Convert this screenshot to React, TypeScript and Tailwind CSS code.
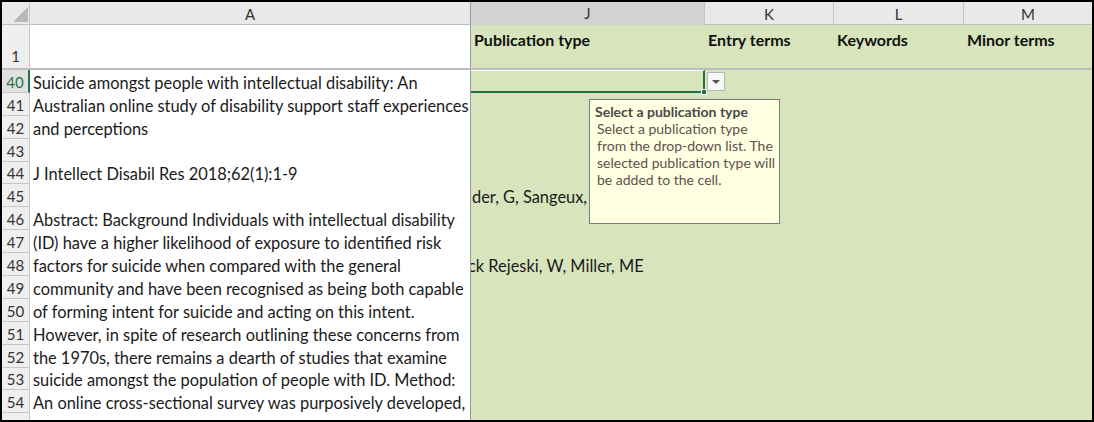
import React from 'react';

const rows: { n: number; a: string; j?: string; jShift?: boolean }[] = [
  { n: 40, a: 'Suicide amongst people with intellectual disability: An' },
  { n: 41, a: 'Australian online study of disability support staff experiences' },
  { n: 42, a: 'and perceptions' },
  { n: 43, a: '' },
  { n: 44, a: 'J Intellect Disabil Res 2018;62(1):1-9' },
  { n: 45, a: '', j: 'der, G, Sangeux,' },
  { n: 46, a: 'Abstract: Background Individuals with intellectual disability' },
  { n: 47, a: '(ID) have a higher likelihood of exposure to identified risk' },
  { n: 48, a: 'factors for suicide when compared with the general', j: 'ck Rejeski, W, Miller, ME', jShift: true },
  { n: 49, a: 'community and have been recognised as being both capable' },
  { n: 50, a: 'of forming intent for suicide and acting on this intent.' },
  { n: 51, a: 'However, in spite of research outlining these concerns from' },
  { n: 52, a: 'the 1970s, there remains a dearth of studies that examine' },
  { n: 53, a: 'suicide amongst the population of people with ID. Method:' },
  { n: 54, a: 'An online cross-sectional survey was purposively developed,' },
];

const font = { fontFamily: 'Lato, "Open Sans", sans-serif' };
const cols = 'grid grid-cols-[28px_441px_234px_129px_130px_128px]';

const App: React.FC = () => {
  return (
    <div className="w-[1094px] h-[422px] bg-white">
      <div
        className="relative w-[1094px] h-[422px] border-2 border-black overflow-hidden bg-white text-[#1a1a1a]"
        style={font}
      >
        {/* column headers */}
        <div className={`${cols} h-[23px] text-[15px] text-[#333] bg-[#e9e9e9] border-b border-[#bdbdbd]`}>
          <div className="relative border-r border-[#c6c6c6]">
            <svg className="absolute left-[11px] top-[5px]" width="15" height="15" viewBox="0 0 15 15">
              <polygon points="15,0 15,15 0,15" fill="#b8b8b8" />
            </svg>
          </div>
          <div className="flex items-center justify-center border-r border-[#9b9b9b]">A</div>
          <div className="flex items-center justify-center bg-[#d3d3d3] border-r border-[#c6c6c6] border-b-2 border-b-[#217346]">J</div>
          <div className="flex items-center justify-center border-r border-[#c6c6c6]">K</div>
          <div className="flex items-center justify-center border-r border-[#c6c6c6]">L</div>
          <div className="flex items-center justify-center">M</div>
        </div>

        {/* row 1 */}
        <div className={`${cols} h-[45px] border-b-2 border-[#bdbdbd]`}>
          <div className="flex items-end justify-center pb-[1px] text-[15px] text-[#333] bg-[#efefef] border-r border-[#c6c6c6]">1</div>
          <div className="bg-white border-r border-[#9b9b9b]" />
          {['Publication type', 'Entry terms', 'Keywords', 'Minor terms'].map((t) => (
            <div key={t} className="bg-[#d8e4bc] pl-[3px] pt-[3px] text-[16px] font-bold text-[#111]">
              {t}
            </div>
          ))}
        </div>

        {/* body rows */}
        {rows.map((r) => (
          <div key={r.n} className={`${cols} h-[22.9px]`}>
            <div
              className={`flex items-end justify-center text-[15px] leading-[19px] border-b border-[#c6c6c6] ${
                r.n === 40
                  ? 'bg-[#e1e1e1] text-[#217346] border-r-2 border-r-[#217346]'
                  : 'bg-[#efefef] text-[#333] border-r border-r-[#c6c6c6]'
              }`}
            >
              {r.n}
            </div>
            <div className="bg-white border-r border-[#9b9b9b] pl-[3px] flex items-end text-[16.4px] leading-[21px] whitespace-nowrap overflow-hidden">
              {r.a}
            </div>
            {r.n === 40 ? (
              <div className="relative bg-[#d8e4bc] border-t border-white border-r-2 border-r-[#217346] border-b-2 border-b-[#217346]">
                <div className="absolute -right-[4px] -bottom-[4px] w-[6px] h-[6px] bg-[#217346] border border-white" />
              </div>
            ) : (
              <div className="bg-[#d8e4bc] overflow-hidden whitespace-nowrap flex items-end text-[16.4px] leading-[21px]">
                {r.j && <span className={r.jShift ? '-ml-[3px]' : 'ml-[1px]'}>{r.j}</span>}
              </div>
            )}
            <div className="bg-[#d8e4bc]" />
            <div className="bg-[#d8e4bc]" />
            <div className="bg-[#d8e4bc]" />
          </div>
        ))}

        {/* partial row 55 */}
        <div className={`${cols} h-[12px]`}>
          <div className="bg-[#efefef] border-r border-[#c6c6c6]" />
          <div className="bg-white border-r border-[#9b9b9b]" />
          <div className="bg-[#d8e4bc]" />
          <div className="bg-[#d8e4bc]" />
          <div className="bg-[#d8e4bc]" />
          <div className="bg-[#d8e4bc]" />
        </div>

        {/* dropdown button */}
        <div className="absolute left-[705px] top-[70px] w-[18px] h-[19px] bg-[#f7f7f7] border border-[#b5b5b5] flex items-center justify-center">
          <svg width="8" height="4" viewBox="0 0 8 4">
            <polygon points="0,0 8,0 4,4" fill="#555" />
          </svg>
        </div>

        {/* input message tooltip */}
        <div className="absolute left-[587px] top-[97px] w-[191px] h-[125px] bg-[#ffffe1] border border-[#7a7a7a] px-[5px] pt-[3px] whitespace-nowrap">
          <div className="text-[14px] font-bold text-[#4a4a4a] leading-[17px]">Select a publication type</div>
          <div className="text-[14px] text-[#5e5050] leading-[17px] pl-[2px]">
            Select a publication type
            <br />
            from the drop-down list. The
            <br />
            selected publication type will
            <br />
            be added to the cell.
          </div>
        </div>
      </div>
    </div>
  );
};

export default App;
